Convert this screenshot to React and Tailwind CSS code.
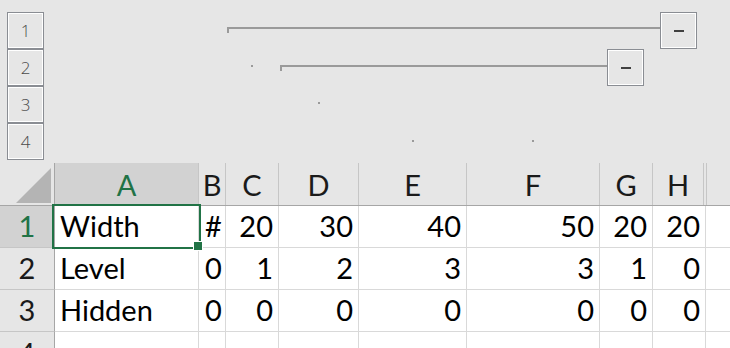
import React from "react";

const cols = [
  { l: "A", w: "w-[144px]" },
  { l: "B", w: "w-[27px]" },
  { l: "C", w: "w-[53px]" },
  { l: "D", w: "w-[80px]" },
  { l: "E", w: "w-[108px]" },
  { l: "F", w: "w-[133px]" },
  { l: "G", w: "w-[53px]" },
];

const dataW = ["w-[27px]", "w-[53px]", "w-[80px]", "w-[108px]", "w-[133px]", "w-[53px]", "w-[53px]"];

const rows = [
  { n: "1", label: "Width", v: ["#", "20", "30", "40", "50", "20", "20"], sel: true },
  { n: "2", label: "Level", v: ["0", "1", "2", "3", "3", "1", "0"] },
  { n: "3", label: "Hidden", v: ["0", "0", "0", "0", "0", "0", "0"] },
];

const font = { fontFamily: "Lato, 'Liberation Sans', sans-serif" };

function LevelBox({ n }) {
  return (
    <div className="w-[37px] h-[37px] border border-[#8a8d93] shadow-[inset_0_0_0_1px_#ffffff] bg-[#e6e6e6] flex items-center justify-center text-[17px] font-light text-[#4a4a4a] leading-none" style={{ fontFamily: "'Open Sans', sans-serif" }}>
      {n}
    </div>
  );
}

function MinusBox({ className }) {
  return (
    <div className={"absolute w-[37px] h-[37px] border border-[#8a8d93] shadow-[inset_0_0_0_1px_#ffffff] bg-[#e6e6e6] flex items-center justify-center " + className}>
      <div className="w-[10px] h-[2px] bg-[#404040]" />
    </div>
  );
}

export default function App() {
  return (
    <div className="relative w-[730px] h-[348px] overflow-hidden bg-white" style={font}>
      {/* Outline area */}
      <div className="relative h-[163px] bg-[#e6e6e6]">
        <div className="flex flex-col pl-[7px] pt-[12px]">
          <LevelBox n="1" />
          <LevelBox n="2" />
          <LevelBox n="3" />
          <LevelBox n="4" />
        </div>
        <div className="absolute left-[227px] top-[27px] w-[433px] h-[2px] bg-[#9a9a9a]" />
        <div className="absolute left-[227px] top-[27px] w-[2px] h-[6px] bg-[#9a9a9a]" />
        <MinusBox className="left-[660px] top-[12px]" />
        <div className="absolute left-[280px] top-[65px] w-[327px] h-[2px] bg-[#9a9a9a]" />
        <div className="absolute left-[280px] top-[65px] w-[2px] h-[6px] bg-[#9a9a9a]" />
        <MinusBox className="left-[607px] top-[49px]" />
        <div className="absolute left-[251px] top-[65px] w-[2px] h-[2px] bg-[#9a9a9a]" />
        <div className="absolute left-[318px] top-[102px] w-[2px] h-[2px] bg-[#9a9a9a]" />
        <div className="absolute left-[412px] top-[140px] w-[2px] h-[2px] bg-[#9a9a9a]" />
        <div className="absolute left-[532px] top-[140px] w-[2px] h-[2px] bg-[#9a9a9a]" />
      </div>

      {/* Column header */}
      <div className="flex h-[43px] bg-[#e6e6e6] border-b border-[#a6a6a6] text-[29px] leading-none text-[#1a1a1a]">
        <div className="w-[55px] shrink-0 border-r border-[#a6a6a6] flex items-end justify-end pr-[3px] pb-[2px]">
          <svg width="35" height="35" viewBox="0 0 35 35">
            <polygon points="35,0 35,35 0,35" fill="#b4b4b4" />
          </svg>
        </div>
        {cols.map((c, i) => (
          <div
            key={c.l}
            className={
              "shrink-0 border-r border-[#c6c6c6] flex items-end justify-center pb-[6px] " +
              c.w +
              (i === 0 ? " bg-[#d2d2d2] text-[#217346]" : "")
            }
          >
            {c.l}
          </div>
        ))}
        <div className="w-[51px] shrink-0 border-r border-[#c6c6c6] flex items-end justify-center pb-[6px]">H</div>
        <div className="w-[3px] shrink-0 border-r border-[#c6c6c6]" />
        <div className="flex-1" />
      </div>

      {/* Data rows */}
      {rows.map((r) => (
        <div key={r.n} className="flex h-[42px] text-[29px] leading-none text-black">
          <div
            className={
              "w-[55px] shrink-0 border-r border-b border-r-[#a6a6a6] border-b-[#c6c6c6] flex items-end justify-center pb-[7px] " +
              (r.sel ? "bg-[#d2d2d2] text-[#217346]" : "bg-[#e6e6e6] text-[#1a1a1a]")
            }
          >
            {r.n}
          </div>
          <div className="w-[144px] shrink-0 border-r border-b border-[#d9d9d9] flex items-end pl-[5px] pb-[7px]">{r.label}</div>
          {r.v.map((v, i) => (
            <div
              key={i}
              className={
                "shrink-0 border-r border-b border-[#d9d9d9] flex items-end pb-[7px] " +
                dataW[i] +
                (i === 0 ? " justify-start pl-[6px]" : " justify-end pr-[5px]")
              }
            >
              {v}
            </div>
          ))}
          <div className="flex-1 border-b border-[#d9d9d9]" />
        </div>
      ))}
      {/* Row 4 */}
      <div className="flex h-[20px] text-[29px] leading-none">
        <div className="w-[55px] shrink-0 border-r border-[#a6a6a6] bg-[#e6e6e6] flex justify-center pt-[6px] text-[#1a1a1a] overflow-hidden">4</div>
        <div className="w-[144px] shrink-0 border-r border-[#d9d9d9]" />
        {dataW.map((w, i) => (
          <div key={i} className={"shrink-0 border-r border-[#d9d9d9] " + w} />
        ))}
      </div>

      {/* Selection */}
      <div className="absolute left-[52px] top-[204px] w-[149px] h-[45px] border-2 border-[#217346] pointer-events-none" />
      <div className="absolute left-[193px] top-[241px] w-[10px] h-[10px] border border-white bg-[#217346]" />
    </div>
  );
}
